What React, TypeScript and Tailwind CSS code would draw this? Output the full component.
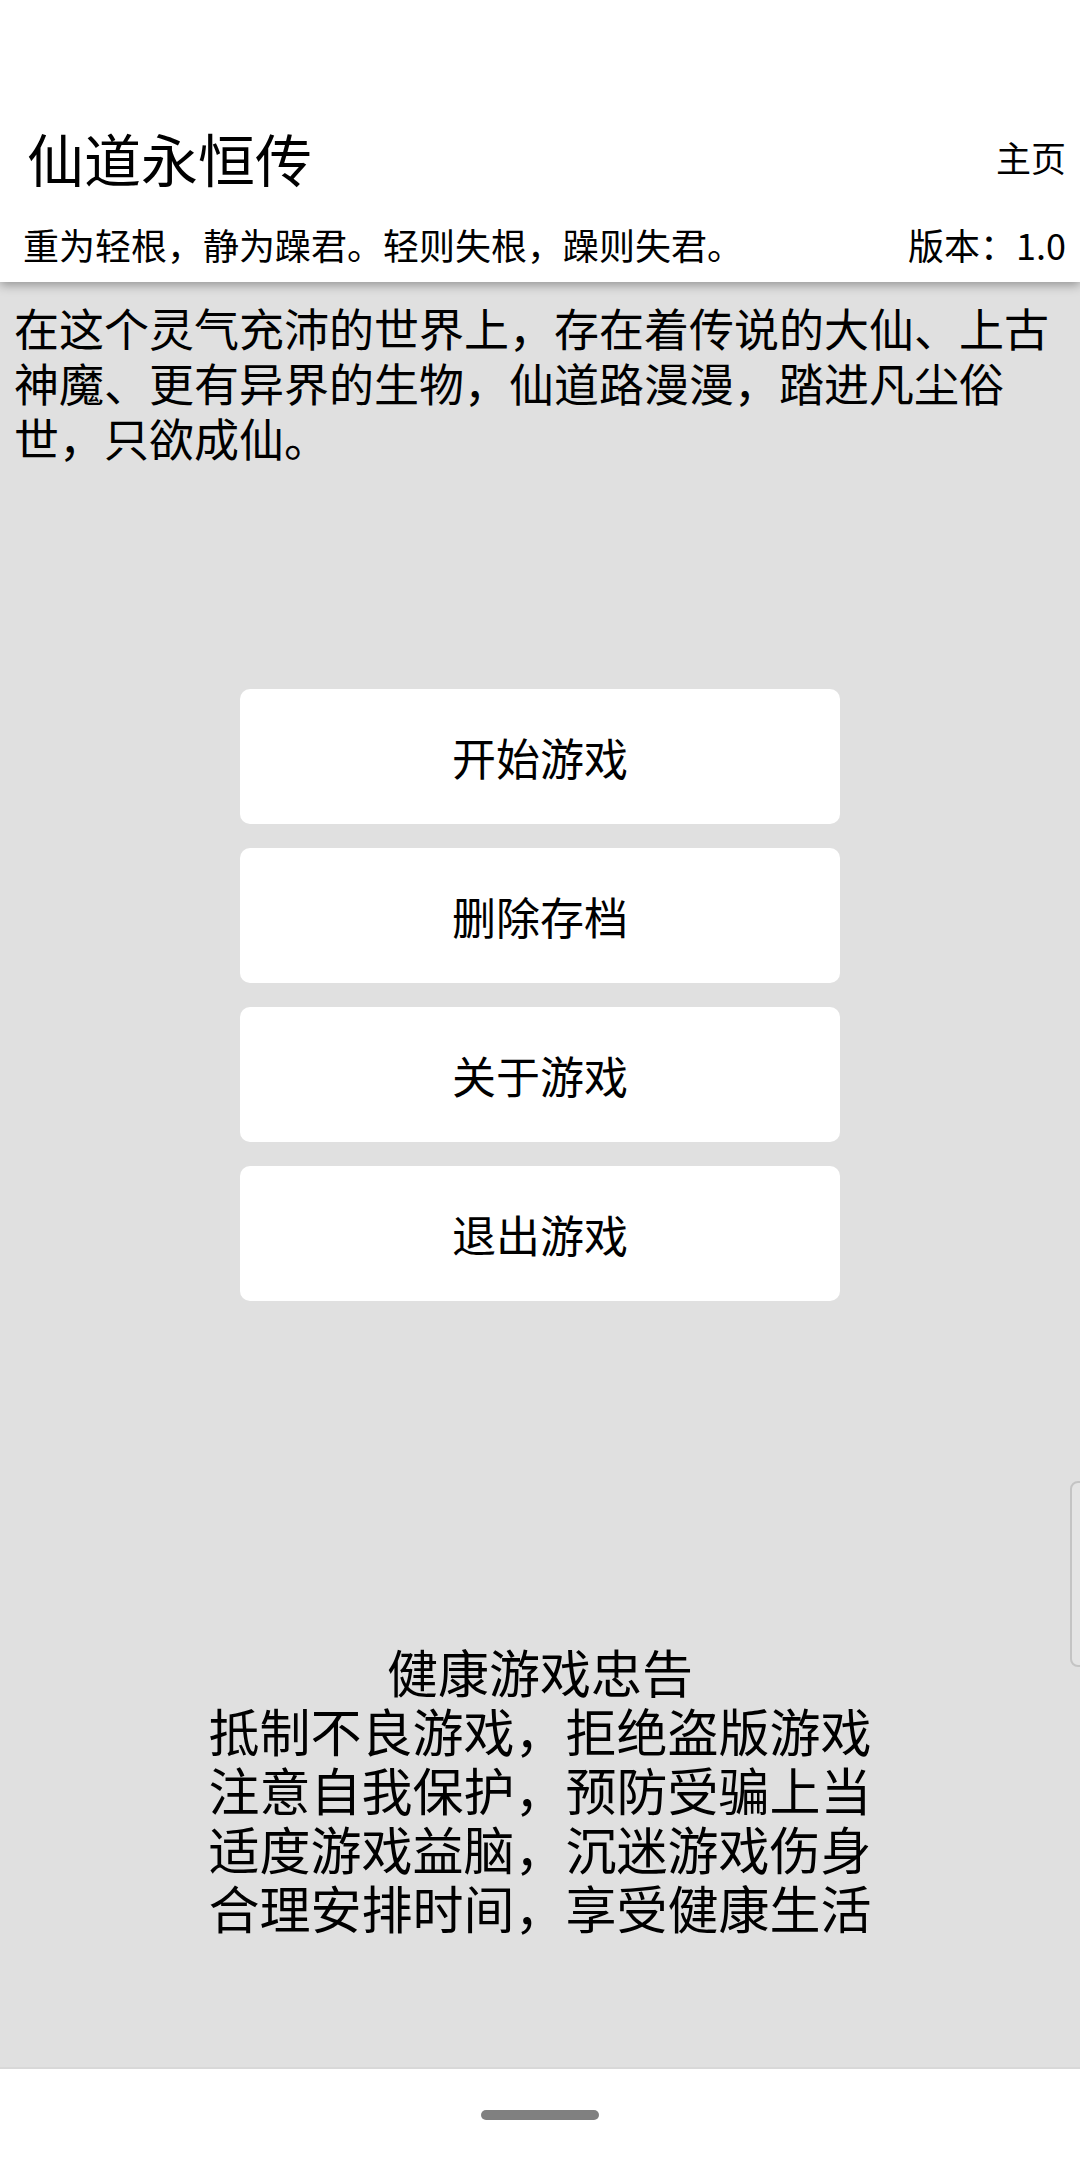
const font = {
  fontFamily: '"Noto Sans CJK SC", "Noto Sans", sans-serif',
};

const menuItems = ["开始游戏", "删除存档", "关于游戏", "退出游戏"];

const healthLines = [
  "抵制不良游戏，拒绝盗版游戏",
  "注意自我保护，预防受骗上当",
  "适度游戏益脑，沉迷游戏伤身",
  "合理安排时间，享受健康生活",
];

export default function App() {
  return (
    <div
      className="relative flex h-[2160px] w-[1080px] flex-col overflow-hidden bg-white text-black"
      style={font}
    >
      {/* 顶部标题栏 */}
      <header className="relative z-10 flex h-[282px] shrink-0 flex-col justify-end bg-white pb-[13px] shadow-[0_3px_10px_rgba(0,0,0,0.35)]">
        <div className="flex items-center justify-between pl-[27px] pr-[14px]">
          <h1 className="text-[57px] leading-[80px] font-normal">仙道永恒传</h1>
          <span className="text-[35px] leading-[50px]">主页</span>
        </div>
        <div className="mt-[22px] flex items-center justify-between pl-[23px] pr-[14px]">
          <p className="text-[36px] leading-[50px]">
            重为轻根，静为躁君。轻则失根，躁则失君。
          </p>
          <span className="text-[36px] leading-[50px]">版本：1.0</span>
        </div>
      </header>

      {/* 主体 */}
      <main className="flex flex-1 flex-col border-b-2 border-[#d8d8d8] bg-[#e0e0e0]">
        <p className="px-[14px] pt-[18px] text-[45px] leading-[55px]">
          在这个灵气充沛的世界上，存在着传说的大仙、上古神魔、更有异界的生物，仙道路漫漫，踏进凡尘俗世，只欲成仙。
        </p>

        <div className="mt-[224px] flex flex-col items-center gap-[24px]">
          {menuItems.map((item) => (
            <button
              key={item}
              className="flex h-[135px] w-[600px] items-center justify-center rounded-[10px] bg-white text-[44px] leading-none"
            >
              {item}
            </button>
          ))}
        </div>

        <div className="mt-[341px] flex flex-col items-center text-[51px] leading-[59px]">
          <p>健康游戏忠告</p>
          {healthLines.map((line) => (
            <p key={line}>{line}</p>
          ))}
        </div>
      </main>

      {/* 底部导航条 */}
      <nav className="flex h-[91px] shrink-0 items-center justify-center bg-white">
        <div className="h-[10px] w-[118px] rounded-full bg-[#808080]" />
      </nav>

      {/* 侧边栏把手 */}
      <div className="absolute right-[-10px] top-[1481px] h-[186px] w-[20px] rounded-[8px] border-2 border-[#c4c4c4] bg-[#e4e4e4]" />
    </div>
  );
}
